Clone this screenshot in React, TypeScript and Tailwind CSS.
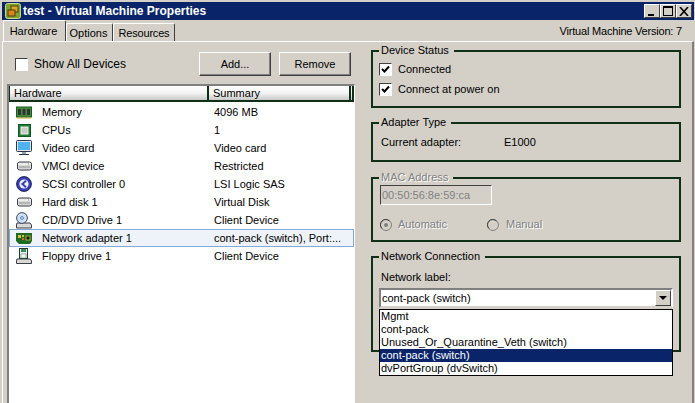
import type { ReactNode } from "react";

function MemoryIcon() {
  return (
    <svg width="16" height="13" viewBox="0 0 16 13">
      <rect x="0.5" y="1" width="15" height="10" fill="#3f8f3a" stroke="#1d5a1f" />
      <rect x="2" y="3" width="3" height="6" fill="#333" />
      <rect x="6.500" y="3" width="3" height="6" fill="#333" />
      <rect x="11" y="3" width="3" height="6" fill="#333" />
      <path d="M1 12h14" stroke="#c9a93a" />
    </svg>
  );
}

function CpuIcon() {
  return (
    <svg width="13" height="13" viewBox="0 0 13 13">
      <rect x="0.5" y="0.5" width="12" height="12" fill="#1f7a32" stroke="#0f5a20" />
      <rect x="3" y="3" width="7" height="7" fill="#c9cbc6" stroke="#f1f1ee" />
    </svg>
  );
}

function MonitorIcon() {
  return (
    <svg width="16" height="16" viewBox="0 0 16 16">
      <rect x="0.5" y="0.5" width="15" height="11" rx="1" fill="#dfe3ea" stroke="#2d3650" />
      <rect x="2" y="2" width="12" height="8" fill="#4fb4ee" />
      <path d="M6 12h4v2H6z" fill="#9aa0ad" />
      <path d="M3 14.5h10" stroke="#2d3650" />
    </svg>
  );
}

function DriveIcon() {
  return (
    <svg width="15" height="10" viewBox="0 0 15 10">
      <rect x="0.5" y="1" width="14" height="8" rx="2" fill="#d9d9d6" stroke="#3c3f4a" />
      <path d="M1 3h13" stroke="#fff" />
      <path d="M2 6h11" stroke="#8d8f96" />
      <path d="M11 3h1" stroke="#58a848" />
    </svg>
  );
}

function ScsiIcon() {
  return (
    <svg width="16" height="16" viewBox="0 0 16 16">
      <circle cx="8" cy="8" r="7.4" fill="#3a3fb5" stroke="#1c1f5c" />
      <circle cx="8" cy="8" r="4.6" fill="#eef0fb" />
      <path d="M10 4.8 6.4 8l3.6 3.2" fill="none" stroke="#3a3fb5" strokeWidth="2" />
    </svg>
  );
}

function CdIcon() {
  return (
    <svg width="16" height="17" viewBox="0 0 16 17">
      <path d="M1 11h13l1.500 2v3H0.500v-3z" fill="#d9d9d6" stroke="#3c3f4a" />
      <circle cx="6" cy="6" r="5.400" fill="#cfe0f2" stroke="#3c4a6a" />
      <circle cx="6" cy="6" r="1.400" fill="#fff" stroke="#4d78b8" />
    </svg>
  );
}

function NetworkIcon() {
  return (
    <svg width="16" height="11" viewBox="0 0 16 11">
      <path d="M0 0h16v8l-2 3H3L0 8z" fill="#1f6a24" />
      <rect x="2" y="2" width="3" height="3" fill="#d9c23c" />
      <rect x="6" y="2" width="2" height="2" fill="#d9c23c" />
      <rect x="6" y="5" width="2" height="2" fill="#e0662a" />
      <rect x="10" y="3" width="4" height="4" fill="#101c10" stroke="#d9c23c" strokeWidth="0.800" />
    </svg>
  );
}

function FloppyIcon() {
  return (
    <svg width="16" height="16" viewBox="0 0 16 16">
      <path d="M1 11h13l1.500 2v2.500H0.500V13z" fill="#d9d9d6" stroke="#3c3f4a" />
      <rect x="3.500" y="0.500" width="8" height="10" fill="#e8ecec" stroke="#263a30" />
      <rect x="5" y="1" width="5" height="3" fill="#3d8d59" />
      <rect x="5" y="6" width="5" height="4" fill="#fff" stroke="#3d8d59" strokeWidth="0.600" />
    </svg>
  );
}

const rows: { icon: ReactNode; name: string; summary: string; selected?: boolean }[] = [
  { icon: <MemoryIcon />, name: "Memory", summary: "4096 MB" },
  { icon: <CpuIcon />, name: "CPUs", summary: "1" },
  { icon: <MonitorIcon />, name: "Video card", summary: "Video card" },
  { icon: <DriveIcon />, name: "VMCI device", summary: "Restricted" },
  { icon: <ScsiIcon />, name: "SCSI controller 0", summary: "LSI Logic SAS" },
  { icon: <DriveIcon />, name: "Hard disk 1", summary: "Virtual Disk" },
  { icon: <CdIcon />, name: "CD/DVD Drive 1", summary: "Client Device" },
  { icon: <NetworkIcon />, name: "Network adapter 1", summary: "cont-pack (switch), Port:...", selected: true },
  { icon: <FloppyIcon />, name: "Floppy drive 1", summary: "Client Device" },
];

const options = ["Mgmt", "cont-pack", "Unused_Or_Quarantine_Veth (switch)", "cont-pack (switch)", "dvPortGroup (dvSwitch)"];

function WinButton({ children }: { children: ReactNode }) {
  return (
    <div className="flex h-[14px] w-[16px] items-center justify-center border border-t-white border-l-white border-r-[#404040] border-b-[#404040] bg-[#d4d0c8]">
      {children}
    </div>
  );
}

function Checkbox({ checked }: { checked?: boolean }) {
  return (
    <div className="flex h-[13px] w-[13px] items-center justify-center border border-t-[#404040] border-l-[#404040] border-r-white border-b-white bg-white">
      {checked ? (
        <svg width="9" height="9" viewBox="0 0 9 9">
          <path d="M1 4l2.500 2.500L8 1.500" fill="none" stroke="#000" strokeWidth="2" />
        </svg>
      ) : null}
    </div>
  );
}

function Group({ title, className, dim, children }: { title: string; className: string; dim?: boolean; children: ReactNode }) {
  return (
    <fieldset className={`shrink-0 border-2 border-[#0f2f17] ${className}`}>
      <legend className={`ml-[6px] pl-[2px] pr-[5px] leading-[13px] ${dim ? "text-[#808080] [text-shadow:1px_1px_0_#fff]" : ""}`}>{title}</legend>
      {children}
    </fieldset>
  );
}

function Radio({ on }: { on?: boolean }) {
  return (
    <svg width="12" height="12" viewBox="0 0 12 12">
      <circle cx="6" cy="6" r="5.500" fill="#d4d0c8" stroke="#808080" />
      <path d="M2 9.500A5 5 0 0 1 9.500 2" fill="none" stroke="#404040" />
      {on ? <circle cx="6" cy="6" r="2" fill="#808080" /> : null}
    </svg>
  );
}

export default function App() {
  return (
    <div className="flex h-[403px] w-[695px] flex-col overflow-hidden bg-[#d4d0c8] pt-[2px] pl-[2px] pr-[1px] text-[11px] leading-[13px] text-black font-['Liberation_Sans',sans-serif]">
      <div className="flex h-[18px] shrink-0 items-center justify-between bg-[#0a246a] pr-[2px] pl-[3px]">
        <div className="flex items-center gap-[2px]">
          <svg width="16" height="16" viewBox="0 0 16 16">
            <rect x="0.500" y="0.500" width="15" height="15" rx="2" fill="#7ea52a" stroke="#c9d98a" />
            <rect x="6" y="3" width="7" height="6" fill="#e0a92c" stroke="#4c3f12" />
            <rect x="3" y="7" width="7" height="6" fill="#d9861f" stroke="#4c3f12" />
          </svg>
          <span className="text-[12px] font-bold text-white">test - Virtual Machine Properties</span>
        </div>
        <div className="flex">
          <WinButton>
            <span className="mt-[7px] mr-[2px] h-[2px] w-[6px] bg-black" />
          </WinButton>
          <WinButton>
            <span className="h-[10px] w-[10px] border border-t-2 border-black" />
          </WinButton>
          <WinButton>
            <svg width="10" height="9" viewBox="0 0 10 9">
              <path d="M1 0l8 9M9 0L1 9" stroke="#000" strokeWidth="1.600" />
            </svg>
          </WinButton>
        </div>
      </div>

      <div className="flex h-[21px] shrink-0 items-end justify-between pl-[1px] pr-[12px]">
        <div className="flex items-end">
          <div className="flex h-[21px] w-[63px] items-center justify-center rounded-t-[2px] border-t border-l border-r border-t-white border-l-white border-r-[#404040] pr-[2px]">Hardware</div>
          <div className="flex h-[18px] w-[47px] items-center justify-center rounded-t-[2px] border-t border-l border-r border-t-white border-l-white border-r-[#404040] pt-[1px] pr-[2px]">Options</div>
          <div className="flex h-[18px] w-[62px] items-center justify-center rounded-t-[2px] border-t border-l border-r border-t-white border-l-white border-r-[#404040] pt-[1px] tracking-[-0.2px]">Resources</div>
        </div>
        <span className="pb-[3px] tracking-[-0.2px]">Virtual Machine Version: 7</span>
      </div>

      <div className="flex min-h-0 flex-1 border-t border-l border-r-2 border-t-white border-l-white border-r-[#808080]">
        <div className="flex w-[362px] shrink-0 flex-col pl-[4px]">
          <div className="flex h-[42px] shrink-0 items-center pt-[2px]">
            <div className="ml-[8px] flex items-center gap-[6px]">
              <Checkbox />
              <span className="text-[12px]">Show All Devices</span>
            </div>
            <div className="ml-auto mr-[14px] flex gap-[8px]">
              <button type="button" className="h-[24px] w-[72px] border border-t-white border-l-white border-r-[#404040] border-b-[#404040] shadow-[inset_-1px_-1px_0_#808080]">Add...</button>
              <button type="button" className="h-[24px] w-[72px] border border-t-white border-l-white border-r-[#404040] border-b-[#404040] shadow-[inset_-1px_-1px_0_#808080]">Remove</button>
            </div>
          </div>
          <div className="mr-[10px] min-h-0 flex-1 border-t-2 border-l-2 border-r border-t-[#808080] border-l-[#808080] border-r-white bg-white">
            <div className="flex h-[16px] border-b-2 border-l border-[#0f2f17] bg-gradient-to-b from-white via-[#f4f4f4] to-[#c9c9c9]">
              <div className="flex w-[199px] items-center border-r-2 border-[#0f2f17] pl-[4px]">Hardware</div>
              <div className="flex flex-1 items-center border-r-2 border-[#0f2f17] pl-[4px]">Summary</div>
              <div className="w-[3px] border-r-2 border-[#0f2f17]" />
            </div>
            <div className="pt-[1px]">
              {rows.map((row) => (
                <div
                  key={row.name}
                  className={`flex h-[18px] items-center border ${row.selected ? "border-[#84a9d6] bg-[#eef2f9]" : "border-transparent"}`}
                >
                  <div className="flex w-[32px] justify-center pr-[4px]">{row.icon}</div>
                  <div className="w-[172px]">{row.name}</div>
                  <div>{row.summary}</div>
                </div>
              ))}
            </div>
          </div>
        </div>

        <div className="relative flex min-w-0 flex-1 flex-col pl-[6px] pr-[11px]">
          <Group title="Device Status" className="mt-[2px] h-[64px]">
            <div className="flex h-[19px] items-center gap-[6px] pt-[5px] pl-[6px]">
              <Checkbox checked />
              <span>Connected</span>
            </div>
            <div className="mt-[4px] flex h-[19px] items-center gap-[6px] pl-[6px]">
              <Checkbox checked />
              <span>Connect at power on</span>
            </div>
          </Group>
          <Group title="Adapter Type" className="mt-[8px] h-[46px]">
            <div className="flex pt-[7px] pl-[8px]">
              <span className="w-[123px]">Current adapter:</span>
              <span>E1000</span>
            </div>
          </Group>
          <Group title="MAC Address" dim className="mt-[9px] h-[71px]">
            <div className="mt-[1px] ml-[7px] flex h-[20px] w-[112px] items-center border border-t-[#404040] border-l-[#404040] border-r-white border-b-white pl-[1px] text-[#808080]">00:50:56:8e:59:ca</div>
            <div className="mt-[13px] ml-[7px] flex items-center text-[#808080] [text-shadow:1px_1px_0_#fff]">
              <Radio on />
              <span className="ml-[6px] w-[89px]">Automatic</span>
              <Radio />
              <span className="ml-[7px]">Manual</span>
            </div>
          </Group>
          <Group title="Network Connection" className="mt-[8px] h-[102px]">
            <div className="pt-[8px] pl-[8px]">Network label:</div>
            <div className="mt-[4px] ml-[6px] flex h-[20px] w-[294px] items-center justify-between border-2 border-t-[#808080] border-l-[#808080] border-r-white border-b-[#d4d0c8] bg-white pl-[1px]">
              <span>cont-pack (switch)</span>
              <div className="flex h-[16px] w-[16px] items-center justify-center border border-t-white border-l-white border-r-[#404040] border-b-[#404040] bg-[#d4d0c8]">
                <span className="h-0 w-0 border-x-[4px] border-t-[4px] border-x-transparent border-t-black" />
              </div>
            </div>
          </Group>
          <div className="absolute top-[267px] left-[14px] w-[294px] border border-black bg-white">
            {options.map((opt) => (
              <div key={opt} className={`h-[13px] pl-[1px] ${opt === "cont-pack (switch)" ? "bg-[#0a246a] text-white" : ""}`}>
                {opt}
              </div>
            ))}
          </div>
        </div>
      </div>
    </div>
  );
}
